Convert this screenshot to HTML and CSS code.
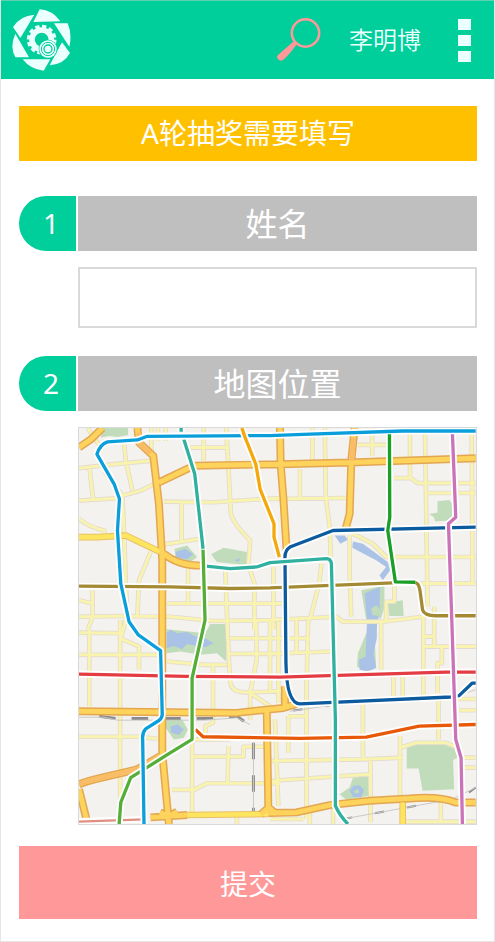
FILE: index.html
```
<!DOCTYPE html>
<html lang="zh-CN">
<head>
  <meta charset="UTF-8" />
  <meta name="viewport" content="width=device-width, initial-scale=1" />
  <title>A轮抽奖需要填写</title>
  <link rel="stylesheet" href="styles.css">
</head>
<body>
  <header class="topbar">
    <a href="/" class="logo" aria-label="首页">
      <svg viewBox="36 26 180 186" aria-hidden="true">
        <g fill="#ecffff">
          <path d="M119 27Q157 29 181 63L100 65Z" />
          <path d="M162 69H203Q217 101 208 139Z" />
          <path d="M186 126L210 158Q192 192 149 195Z" />
          <path d="M68 177H151L131 211Q92 208 68 177Z" />
          <path d="M46 100L87 171H46Q28 140 46 100Z" />
          <path d="M103 43L61 113L39 80Q60 46 103 43Z" />
        </g>
        <g fill="none" stroke="#ecffff">
          <circle cx="125" cy="118" r="29" stroke-width="17" />
          <circle cx="125" cy="118" r="40" stroke-width="9" stroke-dasharray="13 7.94" />
        </g>
        <circle cx="144" cy="146" r="28" fill="#00ce9b" />
        <circle cx="144" cy="146" r="26" fill="#ecffff" />
        <circle cx="144" cy="146" r="20" fill="none" stroke="#00ce9b" stroke-width="3" />
        <circle cx="144" cy="146" r="12" fill="none" stroke="#00ce9b" stroke-width="4" />
      </svg>
    </a>
    <button type="button" class="icon-btn search" aria-label="搜索">
      <svg viewBox="0 0 44 44" aria-hidden="true">
        <circle cx="28.500" cy="15" r="13.700" fill="none" stroke="#ff9999" stroke-width="2.500" />
        <path d="M17 23L20 26Q12 37 6 42Q3 44 1 41Q-1 39 1 37Z" fill="#ff9999" />
      </svg>
    </button>
    <a href="#" class="user">李明博</a>
    <button type="button" class="icon-btn menu" aria-label="菜单">
      <span></span><span></span><span></span>
    </button>
  </header>

  <form class="content">
    <h1 class="banner">A轮抽奖需要填写</h1>

    <section class="field">
      <div class="number">1</div>
      <label class="title" for="name">姓名</label>
      <input class="answer" type="text" id="name" name="name">
    </section>

    <section class="field">
      <div class="number">2</div>
      <h2 class="title">地图位置</h2>
      <div class="answer map">
        <svg viewBox="24 21 1197 1194" role="img" aria-label="地图">
          <defs>
            <path id="minor" d="M24 142L130 130L240 120M55 135L67 240M24 240L150 232M160 65L165 120L185 210M100 150L155 225L210 210L250 190M155 225L160 340L165 480L170 600M50 21L90 80M24 295Q50 318 100 330V345
              M280 243L430 245L630 232M333 243V360M280 372L390 355M360 80H468M400 21V120M468 21L475 150L482 280Q490 310 540 360L535 430M240 395L205 480L200 585M290 550H640M353 445V550M465 450L472 630M540 450L553 490V630
              M24 590L150 588L300 590L430 603L630 600M65 510V590L50 630M24 540L65 550M242 21V90M262 21V60M285 21V60
              M690 145V232M728 21V120M765 21L768 230L780 320L783 410M600 235L830 232M908 21V105M865 72H950M1022 21V170L1045 187H1220M975 172H1022M1067 21L1070 217L1075 560M1075 217H1220M1208 21L1210 400V490
              M850 340L910 370L950 410H1220M840 345V460L845 590M755 430L748 490L720 600M1040 490H1220M600 600L800 590L820 605H940L1060 590M975 490V545H950V600M600 550H640M610 440V630M625 600V850
              M24 638L160 640M24 705H260M55 630V860M148 600V1140M165 600L150 655L205 680V750M290 725L400 735H470M470 600L480 790Q485 815 520 818L630 815M558 600L560 720L540 820V900M480 655H720M480 702H630M600 600V820M540 820L600 860
              M428 735V910L405 920V960M24 952H200L260 958M365 960V1185M365 960H480M370 1012H520V982H600M472 1090L475 980M305 1112H370L410 1092H630M615 900L625 1160
              M600 702L785 695M680 600V700M715 600L710 800V1200M935 600V750M1062 570V830M1095 560V680M1105 730V820M1062 650H1095M1062 680H1220M1118 680V730H1100M972 770V830M1000 770V830
              M880 850V1020M600 1025L880 1020L1000 1015M600 1085L900 1065M903 1025V1210M1108 830V960M992 950V1150M992 985L1040 970H1130L1165 985M1170 872H1220M1150 838H1220M1180 1015H1220M1180 1045H1220M655 890H710M655 890V1000M600 815H640
              M1115 1150V1208M1000 1208H1220M600 1200H700M790 1170V1215M720 1175V1215M500 1190V1215" />
            <path id="major" d="M24 80L60 55L95 21M200 21L205 65L248 105L265 250L275 420V1000L295 1215M265 185L370 135L630 130L840 125L1220 112M630 21L632 130L640 230L650 390M855 21L845 120L840 280L828 325M280 400Q320 435 390 436
              M24 875L300 878L500 880L640 865L680 853M645 800V860M590 865L595 1180M24 1095Q50 1085 80 1078L200 1050L270 1010M24 1110L50 1215M240 1195L350 1188M595 1182L680 1180L780 1158L900 1145L1020 1138Q1110 1130 1160 1150H1220M268 1180L294 1192L320 1178M572 1186L596 1165L620 1186" />
            <path id="yellow" d="M24 350H80L165 345L280 400M350 1188L595 1185M1000 1150V1215" />
            <path id="sky" d="M1220 30H1000L700 40L600 44L230 46L200 57L110 63Q88 70 78 100L130 190L146 235L140 330L150 490L175 605L203 645L270 692L275 885Q275 895 265 903L225 928Q214 940 216 960L220 1215" />
            <path id="brown" d="M24 498L300 500L480 505L600 503L970 488H1040Q1048 490 1052 510L1060 570Q1065 587 1100 587H1220" />
            <path id="red" d="M24 763L350 770L630 772L1130 757H1220" />
            <path id="navy" d="M1220 320L790 330L660 380Q645 390 645 410L648 730Q650 850 690 853L1145 832L1170 828L1210 790H1220" />
            <path id="teal" d="M332 21V32M340 55L373 160L398 385M400 437L480 445L560 440L600 427L770 415Q783 415 785 430L797 900V1160Q810 1190 835 1215" />
            <path id="lime" d="M398 388L404 600L365 775V960L300 1000L180 1075L150 1150L145 1215" />
            <path id="green" d="M960 40L961 290L955 330L978 485L1038 486" />
            <path id="pink" d="M1150 40L1160 290L1138 310L1148 600L1160 960L1176 1015L1180 1215" />
            <path id="orange" d="M375 930L398 952L690 957L890 953L1050 920L1220 915" />
            <path id="amber" d="M515 21L525 50L557 130L570 205L612 310V350L628 410" />
          </defs>

          <rect x="24" y="21" width="1197" height="1194" fill="#f4f2ef" />

          <!-- parks and lakes -->
          <g fill="#c0dcba">
            <path d="M95 21H172V42L140 48L115 45L90 50Z" />
            <path d="M312 385L350 375L380 410L360 425L315 410Z" />
            <path d="M422 402L460 382L530 395V435L440 425Z" />
            <path d="M420 612H468V725L440 700L390 705L330 695L288 700V628L405 640Z" />
            <path d="M285 900L335 900L352 930L340 955L310 960L285 925Z" />
            <path d="M1105 242L1140 238L1150 250V290L1140 300L1098 303L1094 290L1080 280L1105 276Z" />
            <path d="M875 510L945 497V560L935 595L890 600Z" />
            <path d="M955 548L1000 540L1003 588H960Z" />
            <path d="M890 640L915 650L920 740L890 755L862 740L865 700Z" />
            <path d="M1012 985L1040 973H1130L1155 985L1165 1015L1152 1022L1155 1110L1060 1115L1048 1048H1012Z" />
            <path d="M810 1125L840 1105L850 1075L895 1072L898 1130L830 1142Z" />
          </g>
          <g fill="#a9c2e5">
            <path d="M315 395L345 385L368 402L350 417L318 412ZM493 420L510 413L505 425Z" />
            <path d="M288 638L300 630L320 640L350 636L375 650L395 650L430 670L405 682L380 678L350 672L335 688L310 678L288 685Z" />
            <path d="M300 920L322 915L340 930L325 947L302 940Z" />
            <path d="M795 345L825 345L835 358L812 370ZM850 363L880 370L955 425L962 450L940 480L930 465L950 440L920 420L848 382Z" />
            <path d="M885 520L932 500L930 565L920 630L895 630Z" />
            <path d="M892 613H922V655L912 700L920 745L895 755L870 750L868 720L888 710Z" />
            <path fill-rule="evenodd" d="M840 1115L852 1100L870 1098L883 1112L875 1135L850 1133ZM852 1117L858 1124L870 1120L865 1108Z" />
          </g>
          <path fill="#c0dcba" d="M905 565L920 555L932 570L925 588L908 585Z" />

          <!-- streets -->
          <g class="streets">
            <use href="#minor" stroke="#e4dad1" stroke-width="14" />
            <use href="#minor" stroke="#f8f3ae" stroke-width="9" />
            <path stroke="#8b8b8b" stroke-width="9" stroke-dasharray="50 48" d="M85 890L135 897H420L500 890L540 918M550 970V1180" />
            <path stroke="#8b8b8b" stroke-width="6" stroke-dasharray="28 70" d="M670 873L780 858M820 1200L1040 1160L1150 1140M1200 1120L1220 1105" />
            <path stroke="#c9c9c9" stroke-width="3" d="M24 893H100L140 902H400L500 895L540 915M550 970V1180M660 875L780 858L1145 835L1220 810M820 1200L1040 1160L1150 1140L1220 1105" />
            <use href="#yellow" stroke="#e9c06a" stroke-width="20" />
            <use href="#major" stroke="#e3a652" stroke-width="24" />
            <use href="#yellow" stroke="#fde55f" stroke-width="14" />
            <use href="#major" stroke="#fdd35c" stroke-width="15" />
            <path stroke="#fabd67" stroke-width="15" d="M24 1095Q50 1085 80 1078L200 1050L265 1012M205 35V65L240 97M852 50L846 120" />
            <path stroke="#fff" stroke-width="20" d="M24 1207L225 1201" />
            <path stroke="#df9080" stroke-width="7" d="M24 1208L220 1201" />
          </g>

          <!-- metro lines -->
          <g class="metro">
            <use href="#brown" class="casing" /><use href="#brown" stroke="#a48b33" />
            <use href="#navy" class="casing" /><use href="#navy" stroke="#0c5b9e" />
            <use href="#red" class="casing" /><use href="#red" stroke="#e33c43" />
            <use href="#orange" class="casing" /><use href="#orange" stroke="#e75909" />
            <use href="#teal" class="casing" /><use href="#teal" stroke="#30b19f" />
            <use href="#lime" class="casing" /><use href="#lime" stroke="#55ae37" />
            <use href="#sky" class="casing" /><use href="#sky" stroke="#0a9fdb" />
            <use href="#green" class="casing" /><use href="#green" stroke="#1b9f27" />
            <use href="#pink" class="casing" /><use href="#pink" stroke="#ca73b8" />
            <use href="#amber" class="casing" /><use href="#amber" stroke="#f5a80d" />
          </g>
        </svg>
      </div>
    </section>

    <button type="submit" class="submit">提交</button>
  </form>
</body>
</html>
```

FILE: styles.css
```
* {
  box-sizing: border-box;
}

body {
  margin: 0;
  min-height: 100vh;
  background: #fff;
  border: 1px solid #e6e6e6;
  border-top: none;
  font-family: "Noto Sans", "Noto Sans CJK SC", sans-serif;
  color: #fff;
}

.topbar {
  display: flex;
  align-items: center;
  height: 79px;
  padding: 0 23px 0 11px;
  background: #00ce9b;
  border-top: 1px solid #5fcfae;
}

.logo {
  width: 60px;
  height: 62px;
  margin-right: auto;
}

.logo svg,
.icon-btn svg {
  display: block;
  width: 100%;
  height: 100%;
}

.icon-btn {
  padding: 0;
  border: none;
  background: none;
  cursor: pointer;
}

.search {
  width: 44px;
  height: 44px;
}

.user {
  margin: 0 37px 0 28px;
  font-size: 24px;
  font-weight: 350;
  line-height: 32px;
  color: #ecffff;
  text-decoration: none;
}

.menu {
  display: flex;
  flex-direction: column;
  gap: 5px;
}

.menu span {
  width: 13px;
  height: 11px;
  background: #ecffff;
}

.content {
  padding: 27px 17px 22px 18px;
}

.banner {
  margin: 0 0 35px;
  background: #ffc000;
  font-size: 28px;
  font-weight: 400;
  line-height: 55px;
  text-align: center;
}

.field {
  display: grid;
  grid-template-columns: 57px minmax(0, 1fr);
  column-gap: 2px;
  row-gap: 16px;
  margin-bottom: 28px;
}

.number {
  padding-left: 7px;
  background: #00ce9b;
  border-radius: 28px 0 0 28px;
  font-size: 28px;
  line-height: 55px;
  text-align: center;
}

.title {
  margin: 0;
  background: #bfbfbf;
  font-size: 32px;
  font-weight: 400;
  line-height: 55px;
  text-align: center;
}

.answer {
  grid-column: 2;
  border: 2px solid #d9d9d9;
  background: #fff;
}

input.answer {
  width: 100%;
  height: 61px;
  padding: 0 12px;
  border-radius: 0;
  font: inherit;
  font-size: 28px;
  color: #333;
}

.map {
  border-width: 1px;
}

.map svg {
  display: block;
  width: 100%;
}

.streets,
.metro {
  fill: none;
  stroke-linejoin: round;
}

.metro {
  stroke-width: 10px;
}

.metro .casing {
  stroke: #fff;
  stroke-width: 21px;
}

.submit {
  display: block;
  width: 100%;
  height: 73px;
  margin-top: -7px;
  border: none;
  background: #ff9999;
  color: #fff;
  font: inherit;
  font-size: 28px;
  cursor: pointer;
}
```
